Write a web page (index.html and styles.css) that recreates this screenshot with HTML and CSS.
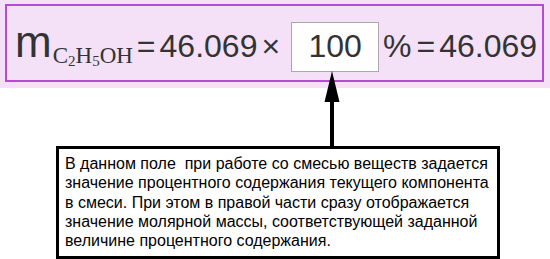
FILE: index.html
```html
<!DOCTYPE html>
<html lang="ru">
<head>
<meta charset="utf-8">
<title>Молярная масса</title>
<link rel="stylesheet" href="styles.css">
</head>
<body>
<div class="panel">
  <div class="formula">
    <span class="var">m<span class="sub">C<span class="idx">2</span>H<span class="idx">5</span>OH</span></span>
    <span class="op op-first">=</span>
    <span class="num">46.069</span>
    <span class="times">×</span>
    <input class="pct" type="text" value="100">
    <span class="unit">%</span>
    <span class="op">=</span>
    <span class="num">46.069</span>
  </div>
</div>
<svg class="arrow" width="20" height="78" viewBox="0 0 20 78">
  <polygon points="10,1 2.5,32 17.5,32" fill="#000"/>
  <rect x="8" y="28" width="4" height="50" fill="#000"/>
</svg>
<div class="note">В данном поле&nbsp; при работе со смесью веществ задается значение процентного содержания текущего компонента в смеси. При этом в правой части сразу отображается значение молярной массы, соответствующей заданной величине процентного содержания.</div>
</body>
</html>
```
FILE: styles.css
```css
html, body {
  margin: 0;
  padding: 0;
}
body {
  position: relative;
  width: 550px;
  height: 259px;
  overflow: hidden;
  background: #fff;
  font-family: "Liberation Sans", Arial, sans-serif;
}
.panel {
  background: #f4e1f7;
  padding: 4px 6px 6px 5px;
}
.formula {
  display: flex;
  align-items: baseline;
  box-sizing: border-box;
  height: 78px;
  border: 2px solid #b54ad6;
  padding: 14px 0 0 8px;
  font-size: 32px;
  line-height: 1;
  color: #333;
  white-space: nowrap;
}
.var {
  font-size: 44px;
  line-height: 1;
}
.sub {
  font-family: "Liberation Serif", "Times New Roman", serif;
  font-size: 23px;
  vertical-align: -6px;
  margin-left: 1px;
}
.idx {
  font-size: 15px;
  vertical-align: -3px;
}
.op {
  margin: 0 4px 0 5px;
}
.op-first {
  margin-left: 4px;
}
.times {
  margin: 0 11px 0 4px;
}
.pct {
  box-sizing: border-box;
  width: 88px;
  height: 50px;
  margin: 0;
  padding: 0;
  border: 1px solid #a9a9a9;
  background: #fff;
  font: inherit;
  color: #333;
  text-align: center;
}
.unit {
  margin-left: 4px;
}
.arrow {
  position: absolute;
  left: 322px;
  top: 70px;
}
.note {
  box-sizing: border-box;
  width: 444px;
  height: 113px;
  margin: 58px 0 0 56px;
  padding: 5px 6px;
  border: 3px solid #000;
  font-size: 16px;
  line-height: 19.3px;
  color: #000;
}
```
